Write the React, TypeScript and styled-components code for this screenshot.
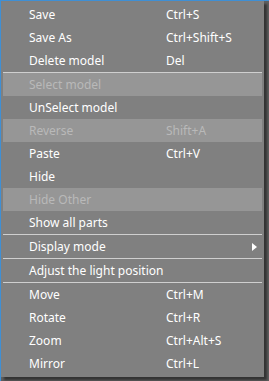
import React from "react";
import styled, { createGlobalStyle } from "styled-components";

const Global = createGlobalStyle`
  html, body {
    margin: 0;
    padding: 0;
    background: #5e5e5e;
    width: 269px;
    height: 381px;
    overflow: hidden;
  }
  #root {
    width: 269px;
    height: 381px;
  }
`;

const Frame = styled.div`
  width: 269px;
  height: 381px;
  box-sizing: border-box;
  border-top: 1px solid #3f8fd4;
  border-left: 1px solid #3f8fd4;
  background: #5e5e5e;
`;

const Menu = styled.div`
  width: 263px;
  box-sizing: border-box;
  padding: 2px 0;
  background: #808080;
  display: flex;
  flex-direction: column;
  box-shadow: 3px 3px 2px rgba(0, 0, 0, 0.45);
  font-family: "Noto Sans", "Liberation Sans", Arial, sans-serif;
  font-size: 12px;
`;

const Item = styled.div<{ $disabled?: boolean }>`
  display: flex;
  align-items: center;
  height: 23px;
  margin: 0 2px;
  padding-left: 26px;
  padding-right: 5px;
  background: ${(p) => (p.$disabled ? "#969696" : "transparent")};
  color: ${(p) => (p.$disabled ? "#b9b9b9" : "#ffffff")};
  white-space: nowrap;
`;

const Label = styled.span`
  width: 137px;
  flex: none;
`;

const Shortcut = styled.span`
  flex: 1;
`;

const Arrow = styled.span`
  width: 0;
  height: 0;
  border-top: 4.5px solid transparent;
  border-bottom: 4.5px solid transparent;
  border-left: 5px solid #ffffff;
`;

const Separator = styled.div`
  height: 1px;
  margin: 0 2px;
  background: #cfcfcf;
`;

type Entry =
  | { sep: true }
  | { label: string; shortcut?: string; disabled?: boolean; submenu?: boolean; sep?: false };

const entries: Entry[] = [
  { label: "Save", shortcut: "Ctrl+S" },
  { label: "Save As", shortcut: "Ctrl+Shift+S" },
  { label: "Delete model", shortcut: "Del" },
  { sep: true },
  { label: "Select model", disabled: true },
  { label: "UnSelect model" },
  { label: "Reverse", shortcut: "Shift+A", disabled: true },
  { label: "Paste", shortcut: "Ctrl+V" },
  { label: "Hide" },
  { label: "Hide Other", disabled: true },
  { label: "Show all parts" },
  { sep: true },
  { label: "Display mode", submenu: true },
  { sep: true },
  { label: "Adjust the light position" },
  { sep: true },
  { label: "Move", shortcut: "Ctrl+M" },
  { label: "Rotate", shortcut: "Ctrl+R" },
  { label: "Zoom", shortcut: "Ctrl+Alt+S" },
  { label: "Mirror", shortcut: "Ctrl+L" },
];

export default function App() {
  return (
    <>
      <Global />
      <Frame>
        <Menu>
          {entries.map((e, i) =>
            e.sep ? (
              <Separator key={i} />
            ) : (
              <Item key={i} $disabled={e.disabled}>
                <Label>{e.label}</Label>
                <Shortcut>{e.shortcut ?? ""}</Shortcut>
                {e.submenu && <Arrow />}
              </Item>
            )
          )}
        </Menu>
      </Frame>
    </>
  );
}
